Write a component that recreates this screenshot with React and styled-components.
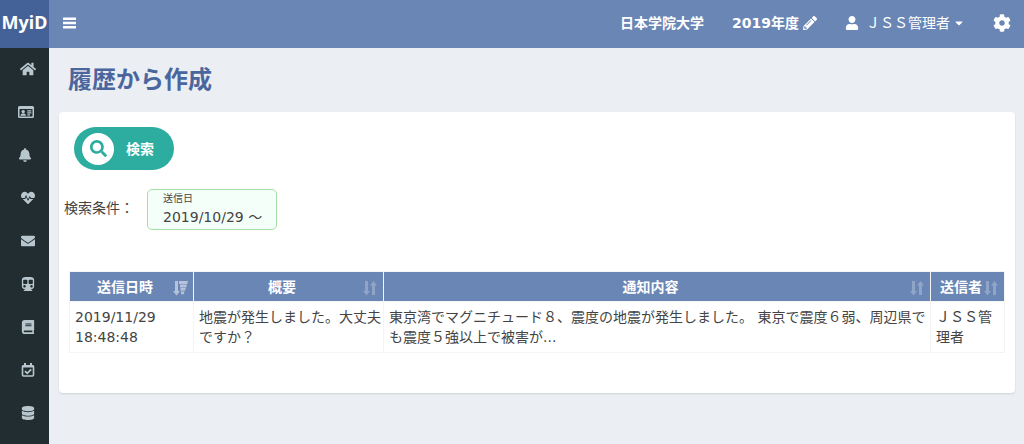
import styled, { createGlobalStyle } from "styled-components";
import {
  FaBell,
  FaBook,
  FaCaretDown,
  FaCog,
  FaDatabase,
  FaEnvelope,
  FaHeartbeat,
  FaHome,
  FaPencilAlt,
  FaSearch,
  FaSubway,
  FaUser,
} from "react-icons/fa";

const GlobalStyle = createGlobalStyle`
  * {
    box-sizing: border-box;
  }
  body {
    margin: 0;
    font-family: "DejaVu Sans", "Noto Sans CJK JP", sans-serif;
    font-size: 14px;
    line-height: 20px;
    color: #444444;
    background-color: #ebeef3;
  }
  button {
    font: inherit;
    color: inherit;
    padding: 0;
    border: none;
    background: none;
    cursor: pointer;
  }
  a {
    color: inherit;
    text-decoration: none;
  }
  svg {
    display: block;
  }
`;
const Page = styled.div`
  display: grid;
  grid-template-columns: 49px minmax(0, 1fr);
  grid-template-rows: 48px auto;
  min-height: 100vh;
`;
const Logo = styled.a`
  display: flex;
  justify-content: center;
  align-items: center;
  padding-bottom: 4px;
  font-family: "Noto Sans", sans-serif;
  font-size: 18px;
  font-weight: 700;
  color: white;
  background-color: #456298;
`;
const Header = styled.header`
  display: flex;
  justify-content: space-between;
  align-items: center;
  padding: 0 13px 2px 14px;
  color: white;
  background-color: #6a86b5;
`;
const HeaderMenu = styled.div`
  display: flex;
  align-items: center;
  gap: 28px;
`;
const HeaderItem = styled.button`
  display: flex;
  align-items: center;
  gap: ${(props) => props.$gap || "4px"};
  font-weight: ${(props) => (props.$bold ? 700 : 400)};
`;
const SchoolName = styled.span`
  font-weight: 700;
`;
const Sidebar = styled.nav`
  color: #b8c7ce;
  background-color: #222d32;
`;
const SideLink = styled.a`
  display: flex;
  align-items: center;
  height: 43px;
  padding: 0 0 2px 18px;
`;
const SideIcon = styled.span`
  display: flex;
  justify-content: center;
  width: ${(props) => (props.$fixed ? "20px" : "auto")};
`;
const Main = styled.main`
  padding: 16px 9px 20px 10px;
`;
const Title = styled.h1`
  margin: 0 0 16px;
  padding-left: 9px;
  font-size: 24px;
  font-weight: 700;
  line-height: 32px;
  color: #4a669c;
`;
const Card = styled.section`
  padding: 15px 10px 40px;
  background-color: white;
  border-radius: 4px;
  box-shadow: 0 1px 2px rgba(0, 0, 0, 0.12);
`;
const SearchButton = styled.button`
  display: flex;
  align-items: center;
  gap: 12px;
  height: 43px;
  margin-left: 5px;
  padding: 0 20px 0 8px;
  font-weight: 700;
  color: white;
  background-color: #2dada0;
  border-radius: 22px;
`;
const SearchCircle = styled.span`
  display: flex;
  justify-content: center;
  align-items: center;
  width: 32px;
  height: 32px;
  color: #2dada0;
  background-color: white;
  border-radius: 50%;
`;
const Conditions = styled.div`
  display: flex;
  align-items: flex-start;
  margin: 19px 0 41px -5px;
`;
const ConditionLabel = styled.span`
  width: 83px;
  padding-top: 9px;
`;
const ConditionBox = styled.div`
  padding: 1px 14px 2px 15px;
  background-color: #f5fffa;
  border: 1px solid #a5dfa5;
  border-radius: 5px;
`;
const ConditionName = styled.div`
  font-size: 10px;
  line-height: 16px;
`;
const ConditionValue = styled.div`
  line-height: 20px;
`;
const Table = styled.table`
  width: 100%;
  table-layout: fixed;
  border-collapse: collapse;
`;
const Col = styled.col`
  width: ${(props) => props.$width};
`;
const Th = styled.th`
  padding: 0;
  font-weight: 700;
  color: white;
  background-color: #6a86b5;
  border: 1px solid #f4f4f4;
`;
const SortButton = styled.button`
  display: grid;
  grid-template-columns: minmax(0, 1fr) 16px;
  align-items: center;
  width: 100%;
  height: 29px;
  padding: 0 5px 0 8px;
  white-space: nowrap;
  svg {
    margin-top: 2px;
    opacity: ${(props) => (props.$sorted ? 0.5 : 0.25)};
  }
`;
const Td = styled.td`
  padding: 5px 2px 5px 5px;
  vertical-align: top;
  border: 1px solid #f4f4f4;
`;

function BarsIcon() {
  return (
    <svg width="13" height="12" viewBox="0 0 13 12" fill="currentColor">
      <path d="M0 .5h13v2.600H0zM0 4.700h13v2.600H0zM0 8.900h13v2.600H0z" />
    </svg>
  );
}

function AddressCardIcon() {
  return (
    <svg width="16" height="14" viewBox="0 0 16 14" fill="currentColor">
      <path
        fillRule="evenodd"
        d="M1.500 1h13A1.500 1.500 0 0 1 16 2.500v9a1.500 1.500 0 0 1-1.500 1.500h-13A1.500 1.500 0 0 1 0 11.500v-9A1.500 1.500 0 0 1 1.500 1zM1.500 4v7.500h13V4z"
      />
      <circle cx="5.200" cy="6.600" r="1.700" />
      <path d="M2.500 10.800c0-1.700 1-2.300 2.700-2.300s2.700.6 2.700 2.300zM9.300 5.200h4v1.300h-4zM9.300 7.200h4v1.300h-4zM9.300 9.200h2.700v1.200H9.300z" />
    </svg>
  );
}

function CalendarCheckIcon() {
  return (
    <svg
      width="14"
      height="14"
      viewBox="0 0 14 14"
      fill="none"
      stroke="currentColor"
    >
      <path d="M4 0v3M10 0v3" strokeWidth="2" />
      <rect x="1.500" y="2.800" width="11" height="10.200" rx="1" strokeWidth="1.600" />
      <path d="M1.500 3.400h11" strokeWidth="2.200" />
      <path d="M4 8.200l2.200 2.200 4-4" strokeWidth="1.700" />
    </svg>
  );
}

function SortIcon({ sorted }) {
  return (
    <svg width="16" height="16" viewBox="0 0 16 16" fill="currentColor">
      <path d="M3 1h3v10h2l-3.500 4.500L1 11h2z" />
      {sorted ? (
        <path d="M7 1h9l-.8 3H7zM8 4.600h7l-.8 2.800H8zM8.500 8h5.300l-.8 2.800H8.500zM9 11.400h3.500l-.8 2.800H9z" />
      ) : (
        <path d="M10 15V5.500H8L11.500 1 15 5.500h-2V15z" />
      )}
    </svg>
  );
}

const menus = [
  { name: "ホーム", icon: FaHome, size: 16, fixed: true },
  { name: "名簿", icon: AddressCardIcon },
  { name: "お知らせ", icon: FaBell, size: 14 },
  { name: "安否確認", icon: FaHeartbeat, size: 14, fixed: true },
  { name: "メール", icon: FaEnvelope, size: 14, fixed: true },
  { name: "交通", icon: FaSubway, size: 14, fixed: true },
  { name: "教科書", icon: FaBook, size: 14, fixed: true },
  { name: "予定", icon: CalendarCheckIcon, fixed: true },
  { name: "データ", icon: FaDatabase, size: 14, fixed: true },
];
const columns = [
  { name: "送信日時", width: "124px", sorted: true },
  { name: "概要", width: "190px" },
  { name: "通知内容", width: "auto" },
  { name: "送信者", width: "74px" },
];
const rows = [
  [
    "2019/11/29 18:48:48",
    "地震が発生しました。大丈夫ですか？",
    "東京湾でマグニチュード８、震度の地震が発生しました。 東京で震度６弱、周辺県でも震度５強以上で被害が...",
    "ＪＳＳ管理者",
  ],
];

function App() {
  return (
    <>
      <GlobalStyle />
      <Page>
        <Logo href="#">MyiD</Logo>
        <Header>
          <HeaderItem aria-label="メニュー">
            <BarsIcon />
          </HeaderItem>
          <HeaderMenu>
            <SchoolName>日本学院大学</SchoolName>
            <HeaderItem $bold>
              2019年度
              <FaPencilAlt size={14} />
            </HeaderItem>
            <HeaderItem $gap="7px">
              <FaUser size={14} />
              <HeaderItem as="span" $gap="3px">
                ＪＳＳ管理者
                <FaCaretDown size={12} />
              </HeaderItem>
            </HeaderItem>
            <HeaderItem aria-label="設定">
              <FaCog size={18} />
            </HeaderItem>
          </HeaderMenu>
        </Header>
        <Sidebar>
          {menus.map(({ name, icon: Icon, size, fixed }) => (
            <SideLink key={name} href="#" aria-label={name}>
              <SideIcon $fixed={fixed}>
                <Icon size={size} />
              </SideIcon>
            </SideLink>
          ))}
        </Sidebar>
        <Main>
          <Title>履歴から作成</Title>
          <Card>
            <SearchButton>
              <SearchCircle>
                <FaSearch size={17} />
              </SearchCircle>
              検索
            </SearchButton>
            <Conditions>
              <ConditionLabel>検索条件：</ConditionLabel>
              <ConditionBox>
                <ConditionName>送信日</ConditionName>
                <ConditionValue>2019/10/29 ～</ConditionValue>
              </ConditionBox>
            </Conditions>
            <Table>
              <colgroup>
                {columns.map((column) => (
                  <Col key={column.name} $width={column.width} />
                ))}
              </colgroup>
              <thead>
                <tr>
                  {columns.map((column) => (
                    <Th key={column.name} scope="col">
                      <SortButton $sorted={column.sorted}>
                        {column.name}
                        <SortIcon sorted={column.sorted} />
                      </SortButton>
                    </Th>
                  ))}
                </tr>
              </thead>
              <tbody>
                {rows.map((row) => (
                  <tr key={row[0]}>
                    {row.map((cell) => (
                      <Td key={cell}>{cell}</Td>
                    ))}
                  </tr>
                ))}
              </tbody>
            </Table>
          </Card>
        </Main>
      </Page>
    </>
  );
}

export default App;
